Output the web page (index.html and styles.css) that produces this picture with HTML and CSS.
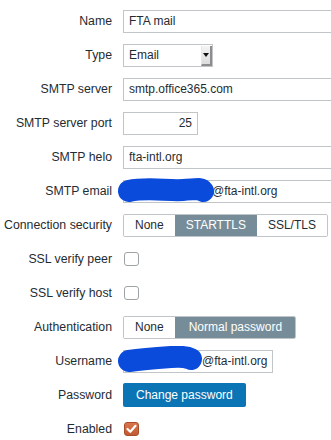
FILE: index.html
```html
<!DOCTYPE html>
<html>
<head>
<meta charset="utf-8">
<link rel="stylesheet" href="styles.css">
</head>
<body>
<form class="form">
  <label class="lbl">Name</label>
  <div class="ctl"><input class="text wide" type="text" value="FTA mail"></div>

  <label class="lbl">Type</label>
  <div class="ctl">
    <div class="select"><span class="select-val">Email</span><span class="select-btn"><span class="tri"></span></span></div>
  </div>

  <label class="lbl">SMTP server</label>
  <div class="ctl"><input class="text wide" type="text" value="smtp.office365.com"></div>

  <label class="lbl">SMTP server port</label>
  <div class="ctl"><input class="text port" type="text" value="25"></div>

  <label class="lbl">SMTP helo</label>
  <div class="ctl"><input class="text wide" type="text" value="fta-intl.org"></div>

  <label class="lbl">SMTP email</label>
  <div class="ctl masked-wrap">
    <input class="text wide email" type="text" value="@fta-intl.org">
    <svg class="blob blob-email" width="100" height="26" viewBox="0 0 100 26"><path d="M12 13 C 30 9, 50 13, 66 12 S 84 10, 86 13" fill="none" stroke="#0b4bdc" stroke-width="22" stroke-linecap="round"/></svg>
  </div>

  <label class="lbl">Connection security</label>
  <div class="ctl">
    <div class="seg"><span class="seg-item">None</span><span class="seg-item on">STARTTLS</span><span class="seg-item">SSL/TLS</span></div>
  </div>

  <label class="lbl">SSL verify peer</label>
  <div class="ctl"><span class="check"></span></div>

  <label class="lbl">SSL verify host</label>
  <div class="ctl"><span class="check"></span></div>

  <label class="lbl">Authentication</label>
  <div class="ctl">
    <div class="seg"><span class="seg-item">None</span><span class="seg-item on auth">Normal password</span></div>
  </div>

  <label class="lbl">Username</label>
  <div class="ctl masked-wrap">
    <input class="text user" type="text" value="@fta-intl.org">
    <svg class="blob blob-user" width="90" height="27" viewBox="0 0 90 27"><path d="M12 15 C 26 13, 40 12, 54 11 S 72 12, 74 13" fill="none" stroke="#0b4bdc" stroke-width="22" stroke-linecap="round"/></svg>
  </div>

  <label class="lbl">Password</label>
  <div class="ctl"><button type="button" class="btn">Change password</button></div>

  <label class="lbl">Enabled</label>
  <div class="ctl"><span class="check checked"><svg width="11" height="10" viewBox="0 0 11 10"><path d="M1.5 5 L4.3 7.8 L9.5 1.8" fill="none" stroke="#fff" stroke-width="2.2" stroke-linecap="round" stroke-linejoin="round"/></svg></span></div>
</form>
</body>
</html>
```

FILE: styles.css
```css
html, body {
  margin: 0;
  padding: 0;
  background: #fff;
}
body {
  font-family: "Liberation Sans", Arial, sans-serif;
  font-size: 12px;
  color: #1f2c33;
  overflow: hidden;
}
.form {
  display: grid;
  grid-template-columns: 112px 1fr;
  column-gap: 11px;
  row-gap: 10px;
  padding-top: 9px;
  margin: 0;
}
.lbl {
  height: 24px;
  display: flex;
  align-items: center;
  justify-content: flex-end;
  white-space: nowrap;
  font-size: 12.3px;
}
.ctl {
  height: 24px;
  display: flex;
  align-items: center;
  min-width: 0;
}
.masked-wrap {
  position: relative;
}
.text {
  box-sizing: border-box;
  flex-shrink: 0;
  height: 23px;
  border: 1px solid #c2c5c7;
  background: #fff;
  font-family: "Liberation Sans", Arial, sans-serif;
  font-size: 12px;
  color: #1f2c33;
  padding: 0 5px;
  margin: 0;
  outline: none;
  border-radius: 0;
}
.wide {
  width: 100%;
  border-right: 0;
}
.port {
  width: 75px;
  text-align: right;
}
.email {
  text-indent: 83px;
}
.user {
  width: 150px;
  text-indent: 73px;
}
.blob {
  position: absolute;
  left: -6px;
}
.blob-email {
  top: -1px;
}
.blob-user {
  top: -3px;
}
.select {
  box-sizing: border-box;
  flex-shrink: 0;
  width: 90px;
  height: 23px;
  border: 1px solid #c2c5c7;
  display: flex;
  align-items: stretch;
  background: #fff;
}
.select-val {
  flex: 1;
  display: flex;
  align-items: center;
  padding-left: 5px;
}
.select-btn {
  width: 8px;
  margin: 1px 0 0 0;
  background: linear-gradient(#f4f4f4, #dcdcdc);
  border-right: 2px solid #8d8d8d;
  border-bottom: 2px solid #8d8d8d;
  border-left: 1px solid #e8e8e8;
  display: flex;
  align-items: center;
  justify-content: center;
}
.tri {
  width: 0;
  height: 0;
  border-left: 3px solid transparent;
  border-right: 3px solid transparent;
  border-top: 4px solid #111;
}
.seg {
  display: flex;
  flex-shrink: 0;
  height: 23px;
  box-sizing: border-box;
  border: 1px solid #c2c5c7;
  border-radius: 2px;
  overflow: hidden;
}
.seg-item {
  display: flex;
  align-items: center;
  padding: 0 11px;
  font-size: 12px;
  color: #1f2c33;
  background: #fff;
}
.seg-item.on {
  background: #768d99;
  color: #fff;
  margin: -1px 0;
}
.seg-item.auth {
  padding: 0 14px;
  margin-right: -1px;
}
.check {
  box-sizing: border-box;
  width: 15px;
  height: 14px;
  margin-left: 1px;
  border: 1px solid #9ea3a6;
  border-radius: 3px;
  background: #fff;
  display: flex;
  align-items: center;
  justify-content: center;
}
.check.checked {
  background: linear-gradient(#d9744b, #c05a33);
  border-color: #a94c2a;
}
.btn {
  height: 24px;
  flex-shrink: 0;
  border: 0;
  border-radius: 2px;
  background: #0a74b5;
  color: #fff;
  font-family: "Liberation Sans", Arial, sans-serif;
  font-size: 12px;
  padding: 0 13px;
  margin: 0;
}
```
